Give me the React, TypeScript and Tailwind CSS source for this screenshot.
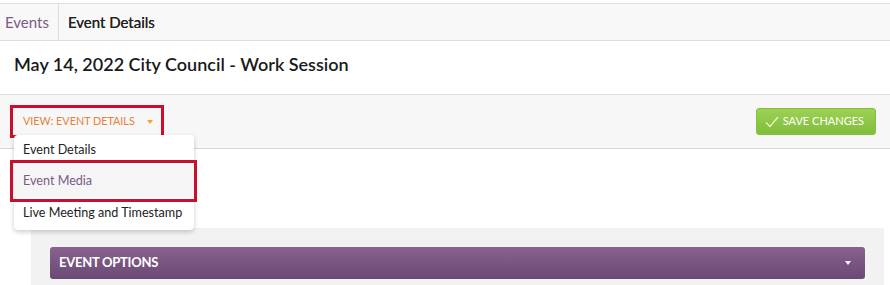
export default function App() {
  const font = { fontFamily: "Lato, 'Open Sans', sans-serif" };
  return (
    <div className="w-[890px] h-[285px] overflow-hidden bg-white text-[#222]" style={font}>
      {/* breadcrumb */}
      <div className="mt-[3px] h-[38px] flex items-stretch bg-[#f8f8f8] border-y border-[#dedede]">
        <div className="pl-[5px] pr-[9px] flex items-center text-[15px] text-[#7b5a87] border-r border-[#dedede]">
          Events
        </div>
        <div className="pl-[9px] flex items-center text-[15px] text-[#222] [text-shadow:0_0_0.4px_#222]">
          Event Details
        </div>
      </div>

      {/* title */}
      <div className="h-[54px] flex items-center px-[14px] pb-[6px] border-b border-[#dedede]">
        <h1 className="text-[18px] font-semibold text-[#1a1a1a]">
          May 14, 2022 City Council - Work Session
        </h1>
      </div>

      {/* toolbar */}
      <div className="relative h-[54px] bg-[#f7f7f7] border-b border-[#d8d8d8] flex items-center justify-between pl-[10px] pr-[14px]">
        <div className="h-[33px] w-[154px] border-[3px] border-[#c8102e] flex items-center pl-[10px] gap-[12px]">
          <span className="text-[10.8px] uppercase text-[#e8803a] whitespace-nowrap">View: Event Details</span>
          <span className="w-0 h-0 border-x-[3px] border-x-transparent border-t-[4px] border-t-[#f5a623]" />
        </div>
        <button className="h-[27px] pl-[8px] pr-[11px] flex items-center gap-[4px] rounded-[3px] bg-gradient-to-b from-[#9dd153] to-[#80bd3c] border border-[#86c040] text-white text-[11px] uppercase">
          <svg width="14" height="12" viewBox="0 0 14 12" fill="none">
            <path d="M1 6.5 L5 10.5 L13 1" stroke="#e7f5d5" strokeWidth="1.2" />
          </svg>
          Save Changes
        </button>

        {/* dropdown menu */}
        <div className="absolute left-[14px] top-[40px] w-[180px] bg-white rounded-[4px] shadow-[0_2px_5px_rgba(0,0,0,0.2)] py-[2px] z-10 text-[12.6px] whitespace-nowrap">
          <div className="h-[26px] flex items-center px-[9px] text-[#222]">Event Details</div>
          <div className="relative h-[32px] flex items-center px-[9px] bg-[#f5f5f5] text-[#7b5a87] mt-[2px]">
            Event Media
            <div className="absolute left-[-4px] right-[-3px] top-[-5px] bottom-[-5px] border-[3px] border-[#c8102e]" />
          </div>
          <div className="h-[30px] flex items-center px-[9px] text-[#222] mt-[1px]">Live Meeting and Timestamp</div>
        </div>
      </div>

      {/* body */}
      <div className="pt-[79px] pl-[31px] pr-[6px]">
        <div className="bg-[#f2f2f2] rounded-[3px] pt-[19px] px-[19px] pb-[10px]">
          <div className="h-[32px] rounded-[3px] bg-gradient-to-b from-[#88628f] to-[#6a4a75] flex items-center justify-between pl-[9px] pr-[14px]">
            <span className="text-white text-[13px] font-bold uppercase tracking-[-0.02em]">Event Options</span>
            <span className="w-0 h-0 border-x-[3px] border-x-transparent border-t-[4px] border-t-white" />
          </div>
        </div>
      </div>
    </div>
  );
}
